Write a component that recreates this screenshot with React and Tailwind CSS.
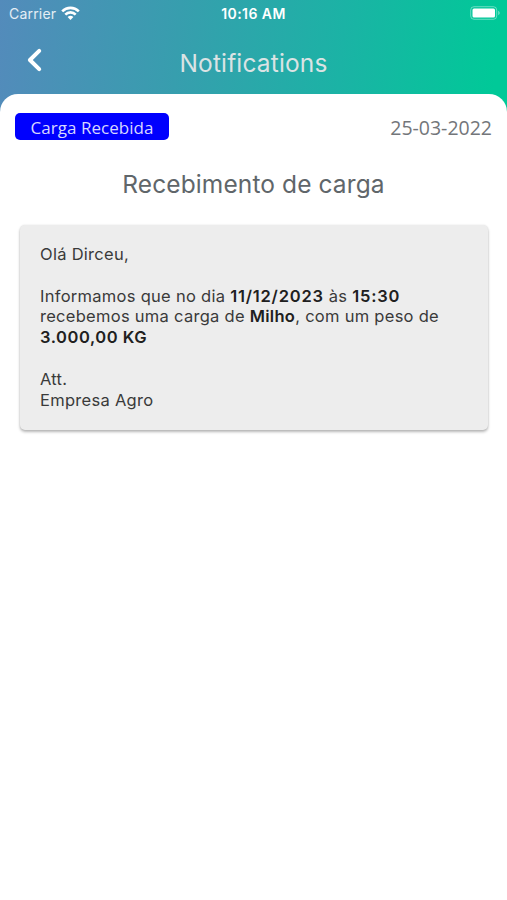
function StatusBar() {
  return (
    <div className="grid h-7 grid-cols-3 items-center pl-[9px] pr-[6px] text-white">
      <div className="flex items-center gap-[5px]">
        <span className="text-[14px] leading-7 tracking-[0.2px] text-white/85">Carrier</span>
        <svg className="mb-[2px]" width="19" height="14" viewBox="0 0 19 14" fill="none" stroke="currentColor" strokeWidth="2.6">
          <path d="M1.2 5.3a11.7 11.7 0 0 1 16.6 0" />
          <path d="M4.3 8.6a7.3 7.3 0 0 1 10.4 0" />
          <path d="M9.5 14 6.6 11.1a4.1 4.1 0 0 1 5.8 0Z" fill="currentColor" stroke="none" />
        </svg>
      </div>
      <span className="-ml-[3px] text-center text-[14px] font-semibold leading-7 tracking-[0.45px]">10:16 AM</span>
      <svg className="mb-[2px] justify-self-end" width="31" height="14" viewBox="0 0 31 14" fill="none">
        <rect x="0.7" y="0.7" width="26" height="12.6" rx="3.3" stroke="white" strokeOpacity="0.4" />
        <rect x="2.5" y="2.5" width="22.5" height="9" rx="1.5" fill="white" />
        <path d="M28.2 4.8v4.4c.9-.4 1.5-1.2 1.5-2.2s-.6-1.8-1.5-2.2Z" fill="white" fillOpacity="0.45" />
      </svg>
    </div>
  );
}

function Header() {
  return (
    <header className="grid h-[66px] grid-cols-[69px_1fr_69px] items-center">
      <svg className="mb-[3px] ml-[26px]" width="17" height="24" viewBox="0 0 17 24" fill="none" stroke="white" strokeWidth="4" strokeLinecap="round" strokeLinejoin="round">
        <path d="M13.2 2.9 3.9 12l9.3 9.1" />
      </svg>
      <h1 className="pt-[4px] text-center text-[24.5px] leading-8 tracking-[0.15px] text-[#dbe3e4]">Notifications</h1>
    </header>
  );
}

function Strong({ children }) {
  return <b className="font-semibold tracking-[0.8px] text-[#202020]">{children}</b>;
}

export default function App() {
  return (
    <div className="flex h-[900px] w-[507px] flex-col overflow-hidden bg-white bg-[linear-gradient(95deg,#538bbb_0%,#379eae_35%,#1bb3a5_67%,#00c998_97%)] bg-[length:100%_114px] bg-no-repeat font-['Inter',sans-serif]">
      <StatusBar />
      <Header />
      <main className="flex-1 rounded-t-[18px] bg-white">
        <div className="flex items-center justify-between px-[15px] pt-[19px] font-['Open_Sans',sans-serif]">
          <span className="flex h-[27px] w-[154px] items-center justify-center rounded-[5px] bg-[#0000fe] pt-[2px] text-[17px] tracking-[0.05px] text-[#d7d7ff]">Carga Recebida</span>
          <time className="pt-[2px] text-[19.5px] leading-[25px] text-[#73767a]">25-03-2022</time>
        </div>
        <h2 className="mt-[28px] text-center text-[24.5px] leading-8 tracking-[0.1px] text-[#60666a]">Recebimento de carga</h2>
        <article className="ml-5 mt-[25px] h-[205px] w-[468px] rounded-[5px] bg-[#ededed] pl-5 pt-[19px] text-[16.5px] leading-[20.8px] tracking-[0.28px] text-[#3a3a3a] shadow-[0_2px_3px_rgba(0,0,0,0.28),0_0_2px_rgba(0,0,0,0.1)]">
          <p>Olá Dirceu,</p>
          <br />
          <p>
            Informamos que no dia <Strong>11/12/2023</Strong> às <Strong>15:30</Strong>
            <br />
            recebemos uma carga de <b className="font-semibold text-[#202020]">Milho</b>, com um peso de
            <br />
            <b className="font-semibold tracking-[0.55px] text-[#202020]">3.000,00 KG</b>
          </p>
          <br />
          <p>Att.</p>
          <p>Empresa Agro</p>
        </article>
      </main>
    </div>
  );
}
